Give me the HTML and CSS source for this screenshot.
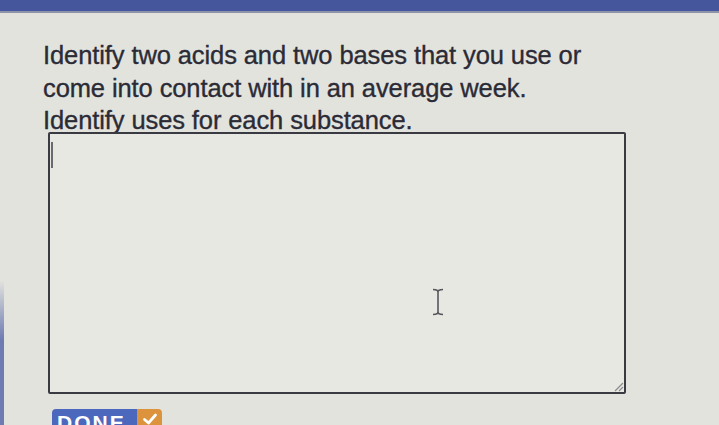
FILE: index.html
```html
<!DOCTYPE html>
<html lang="en">
<head>
<meta charset="utf-8">
<title>Acids and bases</title>
<link rel="stylesheet" href="styles.css">
</head>
<body>
<div class="topbar"></div>
<main class="content">
  <p class="prompt">Identify two acids and two bases that you use or<br>come into contact with in an average week.<br>Identify uses for each substance.</p>
  <div class="answer">
    <span class="caret"></span>
    <svg class="ibeam" width="14" height="28" viewBox="0 0 14 28" aria-hidden="true">
      <path d="M2 1.5 Q7 1.5 7 4 Q7 1.5 12 1.5 M7 4 V24 M2 26.5 Q7 26.5 7 24 Q7 26.5 12 26.5" fill="none" stroke="#55575c" stroke-width="1.6"/>
    </svg>
    <svg class="grip" width="12" height="12" viewBox="0 0 12 12" aria-hidden="true">
      <path d="M11 3 L3 11 M11 7 L7 11" stroke="#8a8a90" stroke-width="1.2"/>
    </svg>
  </div>
  <div class="done">
    <span class="done-label">DONE</span>
    <span class="done-check">
      <svg width="16" height="14" viewBox="0 0 16 14" aria-hidden="true">
        <path d="M2.5 7.5 L6.5 11 L13.5 3" fill="none" stroke="#ffffff" stroke-width="2.8" stroke-linecap="round" stroke-linejoin="round"/>
      </svg>
    </span>
  </div>
</main>
</body>
</html>
```
FILE: styles.css
```css
html, body {
  margin: 0;
  padding: 0;
  height: 100%;
  overflow: hidden;
}
body {
  background-color: #e3e3de;
  background-image: linear-gradient(to bottom, rgba(90,105,170,0) 280px, rgba(90,105,170,0.85) 340px);
  background-size: 4px 100%;
  background-repeat: no-repeat;
  font-family: "Liberation Sans", Arial, sans-serif;
  color: #2b2b36;
}
.topbar {
  height: 11px;
  background: #45569c;
  border-bottom: 2px solid #8d93a8;
}
.content {
  padding: 26px 0 0 43px;
  display: flex;
  flex-direction: column;
  align-items: flex-start;
}
.prompt {
  margin: 0;
  white-space: nowrap;
  font-size: 25.5px;
  line-height: 32.5px;
  letter-spacing: -0.1px;
  -webkit-text-stroke: 0.35px #2b2b36;
}
.answer {
  position: relative;
  margin: -5px 0 0 5px;
  width: 574px;
  height: 258px;
  border: 2px solid #3a3a42;
  border-radius: 2px;
  background: #e8e8e3;
}
.caret {
  position: absolute;
  left: 1px;
  top: 8px;
  width: 2px;
  height: 26px;
  background: #6a6a70;
}
.ibeam {
  position: absolute;
  left: 381px;
  top: 154px;
}
.grip {
  position: absolute;
  right: 0;
  bottom: 0;
}
.done {
  margin: 15px 0 0 9px;
  display: flex;
  height: 24px;
  border-radius: 4px 4px 0 0;
  overflow: hidden;
}
.done-label {
  background: #4c68bd;
  color: #ffffff;
  font-weight: bold;
  font-size: 21px;
  letter-spacing: 2px;
  line-height: 24px;
  padding: 2px 6px 0 5px;
  width: 74px;
}
.done-check {
  background: #dd923c;
  width: 25px;
  display: flex;
  justify-content: center;
  padding-top: 3px;
}
```
